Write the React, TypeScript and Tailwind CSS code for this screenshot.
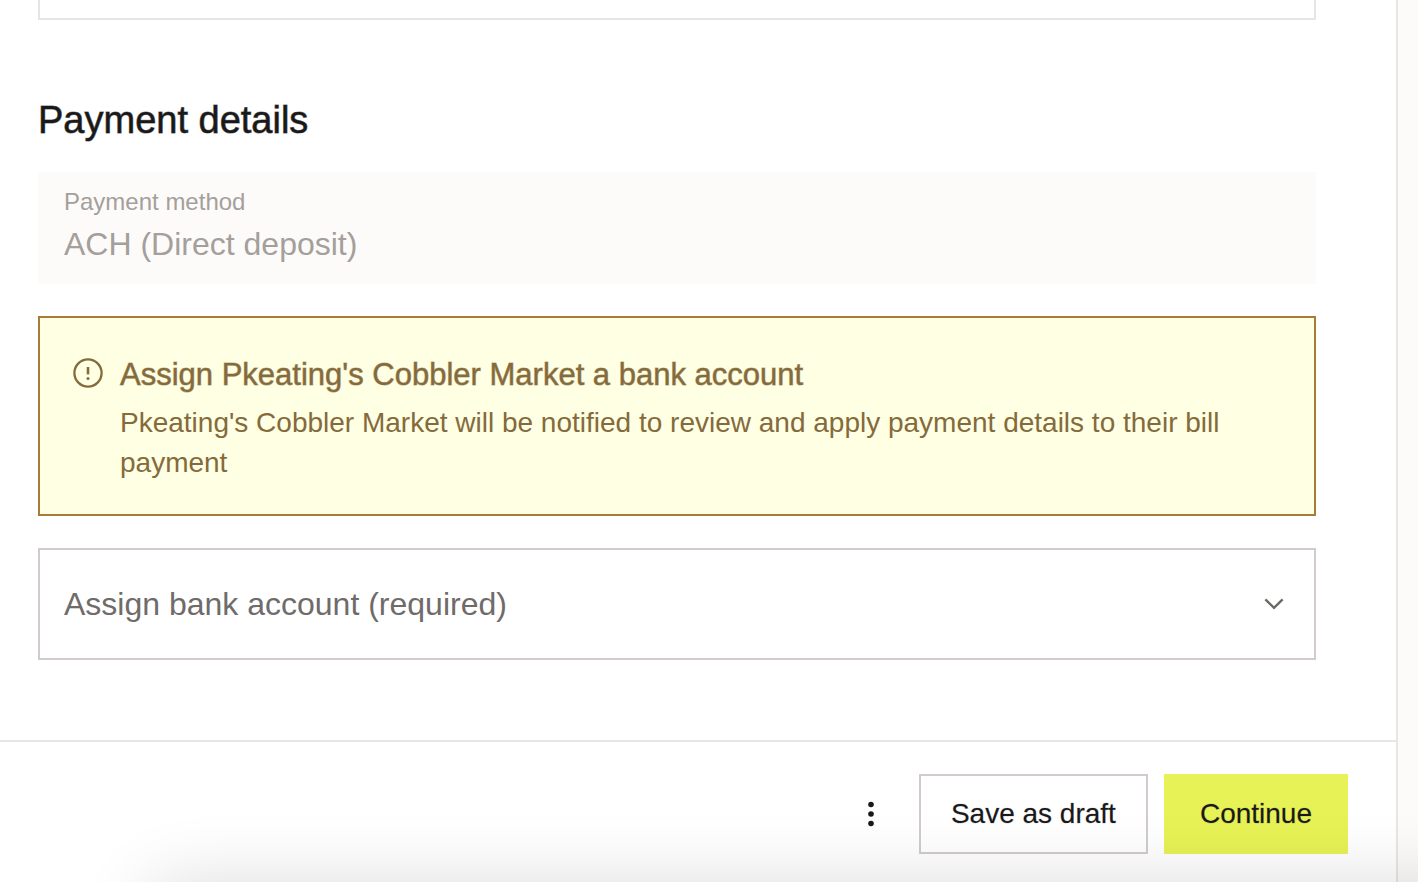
import { useState } from "react";

function AlertIcon() {
  return (
    <svg className="size-8 shrink-0" viewBox="0 0 32 32" fill="none" aria-hidden="true">
      <circle cx="16" cy="16" r="13.6" stroke="currentColor" strokeWidth="2.3" />
      <path d="M16 10v7.4" stroke="currentColor" strokeWidth="2.6" />
      <circle cx="16" cy="21.4" r="1.5" fill="currentColor" />
    </svg>
  );
}

function ChevronIcon() {
  return (
    <svg
      className="pointer-events-none col-start-1 row-start-1 mr-[26px] size-8 self-center justify-self-end text-[#6b6866]"
      viewBox="0 0 32 32"
      fill="none"
      aria-hidden="true"
    >
      <path d="M7.4 11.400l8.600 8.400 8.600-8.400" stroke="currentColor" strokeWidth="2.4" />
    </svg>
  );
}

function PaymentMethodField() {
  return (
    <div className="mt-7 flex h-28 flex-col bg-[#fcfbfa] px-[26px] pt-4 text-[#a59f9b]">
      <label htmlFor="payment-method" className="text-2xl leading-7">
        Payment method
      </label>
      <input
        id="payment-method"
        disabled
        value="ACH (Direct deposit)"
        className="mt-2 h-10 w-full bg-transparent text-[32px] leading-10"
      />
    </div>
  );
}

function BankAccountNotice() {
  return (
    <section className="mt-8 flex gap-4 border-2 border-[#a67c38] bg-[#feffe3] px-8 pt-[37px] pb-[31px] text-[#856a3c]">
      <div className="pt-0.5">
        <AlertIcon />
      </div>
      <div>
        <h3 className="text-[31px] leading-10 [-webkit-text-stroke:1px_#856a3c88]">
          Assign Pkeating's Cobbler Market a bank account
        </h3>
        <p className="mt-2 text-[28px] leading-10">
          Pkeating's Cobbler Market will be notified to review and apply payment details to their
          bill payment
        </p>
      </div>
    </section>
  );
}

function BankAccountSelect() {
  const [account, setAccount] = useState("");
  return (
    <div className="mt-8 grid">
      <select
        aria-label="Assign bank account (required)"
        value={account}
        onChange={(event) => setAccount(event.target.value)}
        className="col-start-1 row-start-1 h-28 w-full appearance-none rounded-none border-2 border-[#d1ccc9] bg-white px-6 text-[32px] text-[#6f6b69]"
      >
        <option value="">Assign bank account (required)</option>
      </select>
      <ChevronIcon />
    </div>
  );
}

function FooterActions() {
  return (
    <footer className="flex items-center justify-end gap-4 border-t-2 border-[#e8e6e4] pt-8 pr-12 pb-7 text-[28px] text-[#1a1919]">
      <button type="button" aria-label="More actions" className="mr-4 flex h-20 w-8 items-center justify-center">
        <svg className="h-8 w-8" viewBox="0 0 32 32" fill="currentColor" aria-hidden="true">
          <circle cx="16" cy="6.500" r="2.800" />
          <circle cx="16" cy="16" r="2.800" />
          <circle cx="16" cy="25.500" r="2.800" />
        </svg>
      </button>
      <button
        type="button"
        className="h-20 border-2 border-[#d1ccc9] bg-white px-[30px] [-webkit-text-stroke:1px_#1a191933]"
      >
        Save as draft
      </button>
      <button type="button" className="h-20 bg-[#e7f256] px-9 [-webkit-text-stroke:1px_#1a191933]">
        Continue
      </button>
    </footer>
  );
}

export default function App() {
  return (
    <div className="relative flex min-h-screen overflow-hidden bg-white font-['Liberation_Sans',Arial,sans-serif]">
      <div className="flex min-w-0 flex-1 flex-col border-r-2 border-[#e8e6e4]">
        <main className="flex-1 pr-20 pl-[38px]">
          <div className="h-5 border-x-2 border-b-2 border-[#e8e4e1]" />
          <h2 className="mt-[76px] text-[38px] leading-12 text-[#1a1919] [-webkit-text-stroke:1px_#1a191999]">
            Payment details
          </h2>
          <PaymentMethodField />
          <BankAccountNotice />
          <BankAccountSelect />
        </main>
        <FooterActions />
      </div>
      <aside className="w-5 bg-[#fcfbfa]" />
      <div className="pointer-events-none absolute top-full -right-20 left-36 h-80 rounded-[40px] shadow-[0_0_72px_rgba(0,0,0,0.14)]" />
    </div>
  );
}
